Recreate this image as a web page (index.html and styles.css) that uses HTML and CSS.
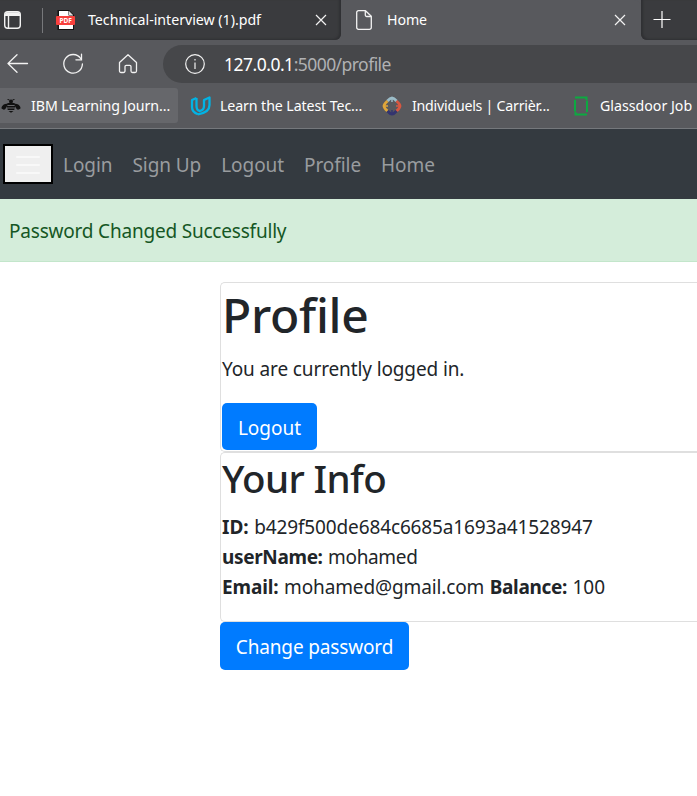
FILE: index.html
```
<!DOCTYPE html>
<html lang="en">
<head>
<meta charset="utf-8">
<title>Home</title>
<link rel="stylesheet" href="styles.css">
</head>
<body>
<header class="browser">
  <div class="tabs">
    <div class="tab tab-first">
      <svg class="tab-menu" width="20" height="20" viewBox="0 0 20 20" fill="none" stroke="#f2f2f2" stroke-width="1.4"><rect x="1.700" y="1.700" width="15.600" height="16.600" rx="3"/><path d="M2.500 3.200h14M2 5h15" stroke-width="2"/><path d="M5.500 5v13"/></svg>
      <span class="divider"></span>
      <svg class="pdf" width="20" height="20" viewBox="0 0 20 20"><path d="M1.500 0H13l5 5v15H1.500z" fill="#111"/><path d="M3 1h9.500v4.500H17V19H3z" fill="#fff"/><path d="M13 1v4h4z" fill="#ddd"/><rect x="0" y="6" width="19" height="9" rx="1" fill="#f8403c"/><text x="9.600" y="13" text-anchor="middle" class="pdf-label">PDF</text></svg>
      <span class="tab-title title-pdf">Technical-interview (1).pdf</span>
      <svg class="close close-first" width="12" height="12" viewBox="0 0 12 12" stroke="#f2f2f2" stroke-width="1.2"><path d="M1 1l10 10M11 1L1 11"/></svg>
    </div>
    <div class="tab tab-active">
      <svg class="page-icon" width="16" height="20" viewBox="0 0 16 20" fill="none" stroke="#f2f2f2" stroke-width="1.300" stroke-linejoin="round"><path d="M2.500.7H9.500L15.300 6.300V17.500a1.800 1.800 0 0 1-1.800 1.800H2.500A1.800 1.800 0 0 1 .7 17.500V2.500A1.800 1.800 0 0 1 2.500.7z"/><path d="M9.300.9V5a1.500 1.500 0 0 0 1.500 1.500H15"/></svg>
      <span class="tab-title title-home">Home</span>
      <svg class="close" width="12" height="12" viewBox="0 0 12 12" stroke="#f2f2f2" stroke-width="1.200"><path d="M1 1l10 10M11 1L1 11"/></svg>
    </div>
    <div class="tab tab-new">
      <svg width="18" height="18" viewBox="0 0 18 18" stroke="#fff" stroke-width="1.200"><path d="M.5 8.500h17M9 0v17"/></svg>
    </div>
  </div>
  <div class="toolbar">
    <svg class="back" width="22" height="20" viewBox="0 0 22 20" fill="none" stroke="#f2f2f2" stroke-width="1.300" stroke-linecap="round" stroke-linejoin="round"><path d="M20.500 9.500H1M10 .8L1 9.500l9 8.700"/></svg>
    <svg class="reload" width="22" height="22" viewBox="0 0 22 22" fill="none" stroke="#f2f2f2" stroke-width="1.300" stroke-linecap="round"><path d="M18.800 5.600A9.300 9.300 0 1 0 20.400 11"/><path d="M19.500 1.200v5.600h-5.600"/></svg>
    <svg class="home" width="20" height="22" viewBox="0 0 20 22" fill="none" stroke="#f2f2f2" stroke-width="1.300" stroke-linejoin="round"><path d="M1.500 9.500L10 1.700l8.500 7.800V18a1.500 1.500 0 0 1-1.500 1.500h-2.500A1.500 1.500 0 0 1 13 18v-4.500a1.200 1.200 0 0 0-1.200-1.200H8.200A1.200 1.200 0 0 0 7 13.500V18a1.500 1.500 0 0 1-1.500 1.500H3A1.500 1.500 0 0 1 1.500 18z"/></svg>
    <div class="address">
      <svg width="20" height="20" viewBox="0 0 20 20" fill="none" stroke="#f2f2f2" stroke-width="1.200"><circle cx="10" cy="10" r="9.300"/><path d="M10 8.500V15M10 5v1.600"/></svg>
      <span class="host">127.0.0.1</span><span class="path">:5000/profile</span>
    </div>
  </div>
  <nav class="bookmarks">
    <a class="bookmark mark-ibm"><svg width="20" height="14" viewBox="0 0 20 14"><g fill="#111"><path d="M7.500 4.500L4 5Q.3 6.500.5 9.500q3 2.500 4.500-.5zM12.500 4.500L16 5q3.700 1.500 3.500 4.500-3 2.500-4.500-.5z"/><circle cx="10" cy="2.600" r="2"/><path d="M6.500 4h7v2h-7zM6 7h8v1.600H6zM6.300 9.600h7.400l-.5 1.400H6.800zM7.500 12h5L10 13.800z"/></g><path d="M8.500 1L6.500.4M11.500 1l2-.6" stroke="#111"/></svg><span>IBM Learning Journ...</span></a>
    <a class="bookmark mark-udacity"><svg width="22" height="20" viewBox="0 0 22 20" fill="none" stroke="#02b3e4" stroke-width="2.300" stroke-linejoin="round"><path d="M6.500 2L2 4v7q0 5 6 7.300"/><path d="M6.500 2v8q0 4.500 3.500 5 4-1 4-5V4l5.500-2.500V9q0 7.500-11.500 9.300"/></svg><span>Learn the Latest Tec...</span></a>
    <a class="bookmark mark-careers"><svg width="20" height="20" viewBox="0 0 20 20" fill="none" stroke-width="2.800"><path d="M5.500 5Q8 2 10 2t4.500 3" stroke="#9bbcc8"/><path d="M14.500 5Q18 8 18 10t-3.500 5" stroke="#d95740"/><path d="M5.500 5Q2 8 2 10t3.500 5" stroke="#dfa63a"/><path d="M5.500 15Q8 18 10 18t4.500-3" stroke="#34346f"/><path d="M10 2v4" stroke="#9bbcc8" stroke-width="1.500"/><path d="M10 14v4" stroke="#34346f" stroke-width="1.500"/><path d="M3 10h3" stroke="#dfa63a" stroke-width="1.500"/><path d="M14 10h3" stroke="#d95740" stroke-width="1.500"/></svg><span>Individuels | Carrièr...</span></a>
    <a class="bookmark mark-glassdoor"><svg width="16" height="20" viewBox="0 0 16 20" fill="none" stroke="#0caa41" stroke-width="2"><path d="M2 15.500V4M2 1.500h11.500V4M14 4.500V16M14 18.500H2.500V16"/></svg><span>Glassdoor Job</span></a>
  </nav>
</header>
<nav class="navbar">
  <button class="toggler" aria-label="Toggle navigation"><svg width="26" height="20" viewBox="0 0 26 20" stroke="#f8f8f8" stroke-width="2" stroke-linecap="round"><path d="M2 2h22M2 10h22M2 18h22"/></svg></button>
  <a class="nav-login">Login</a>
  <a class="nav-signup">Sign Up</a>
  <a class="nav-logout">Logout</a>
  <a class="nav-profile">Profile</a>
  <a class="nav-home">Home</a>
</nav>
<div class="alert"><span>Password Changed Successfully</span></div>
<main>
  <section class="card">
    <h1><span>Profile</span></h1>
    <p class="status">You are currently logged in.</p>
    <button class="btn btn-logout">Logout</button>
  </section>
  <section class="card">
    <h2><span>Your Info</span></h2>
    <div class="info">
      <div><b class="l-id">ID:</b><span class="v-id">b429f500de684c6685a1693a41528947</span></div>
      <div><b class="l-user">userName:</b><span class="v-user">mohamed</span></div>
      <div><b class="l-email">Email:</b><span class="v-email">mohamed@gmail.com</span><b class="l-balance">Balance:</b><span class="v-balance">100</span></div>
    </div>
  </section>
  <button class="btn btn-password">Change password</button>
</main>
</body>
</html>
```
FILE: styles.css
```
* { box-sizing: border-box; }
html { overflow: hidden; }
body { margin: 0; background: #fff; color: #212529; font: 19px/30px "Noto Sans", "Open Sans", sans-serif; white-space: nowrap; overflow: hidden; }
svg { display: block; flex: none; }
h1, h2, p { margin: 0; }

.browser { height: 129px; background: #58595d; border-bottom: 1px solid #75787c; color: #fff; overflow: hidden; }
.tabs { display: flex; height: 40px; background: #58595d; font-size: 14.2px; line-height: 20px; }
.tab { display: flex; align-items: center; height: 40px; background: #3a3b3e; }
.tab-first { width: 341px; padding-left: 3px; border-bottom-right-radius: 6px; box-shadow: inset -2px -1px 2px #303134; }
.divider { width: 1px; height: 25px; margin: 0 13px 0 19px; background: #77787b; }
.pdf-label { font: bold 6.5px "Noto Sans", sans-serif; fill: #fff; }
.title-pdf { width: 227px; margin-left: 12px; letter-spacing: -.02px; }
.tab-active { width: 300px; background: #58595d; padding-left: 15px; border-radius: 7px 7px 0 0; }
.title-home { width: 227px; margin-left: 15px; letter-spacing: -.1px; }
.tab-new { flex: 1; padding-left: 12px; border-bottom-left-radius: 6px; box-shadow: inset 2px -1px 2px #303134; }

.toolbar { display: flex; align-items: center; height: 48px; padding-left: 7px; }
.reload { margin-left: 33px; }
.home { margin-left: 34px; }
.address { display: flex; align-items: center; flex: 1; height: 38px; margin-left: 25px; padding-left: 22px; border-radius: 19px 0 0 19px; background: #46474a; font-size: 17.5px; }
.host { margin-left: 19px; letter-spacing: -.5px; }
.path { color: #b0b1b3; letter-spacing: -.55px; }

.bookmarks { display: flex; height: 35px; font-size: 14.2px; }
.bookmark { display: flex; align-items: center; flex: none; }
.mark-ibm { width: 178px; padding-left: 1px; background: #66676b; border-radius: 0 3px 3px 0; letter-spacing: -.07px; }
.mark-ibm span { margin-left: 10px; }
.mark-udacity { width: 204px; padding-left: 12px; letter-spacing: -.1px; }
.mark-udacity span { margin-left: 8px; }
.mark-careers { width: 191px; letter-spacing: -.24px; }
.mark-careers span { margin-left: 10px; }
.mark-glassdoor span { margin-left: 11px; }

.navbar { display: flex; align-items: center; gap: 20px; height: 70px; padding-left: 3px; background: #343a40; color: #999c9f; }
.toggler { display: flex; align-items: center; justify-content: center; width: 50px; height: 40px; margin-right: -10px; padding: 2px 0 0; border: 2px solid #000; background: #efefef; }
.navbar a { position: relative; top: 1px; letter-spacing: -.07px; }
.alert { height: 63px; padding: 17px 0 0 9px; background: #d4edda; border-bottom: 1px solid #c3e6cb; color: #155724; letter-spacing: -.2px; }

main { margin: 20px 0 0 220px; }
.card { height: 170px; border: 1px solid #dfdfdf; border-right: 0; border-radius: 5px 0 0 5px; padding-left: 1px; }
h1 { height: 71px; font-size: 48px; line-height: 64px; font-weight: 500; letter-spacing: -.3px; }
h2 { height: 59px; font-size: 38.5px; line-height: 51px; font-weight: 500; letter-spacing: -.6px; }
.status { height: 49px; letter-spacing: -.12px; }
.btn { display: block; padding: 3px 0 0; border: 0; border-radius: 5px; background: #007bff; color: #fff; font: inherit; text-align: center; }
.btn-logout { width: 95px; height: 47px; }
.btn-password { width: 189px; height: 48px; padding-top: 2px; letter-spacing: -.15px; }
.info div { display: flex; gap: 5.5px; }
.v-id { letter-spacing: -.13px; }
.l-user, .v-user { letter-spacing: -.35px; }
.l-email, .v-email { letter-spacing: -.12px; }
.l-balance { letter-spacing: -.35px; }
```
